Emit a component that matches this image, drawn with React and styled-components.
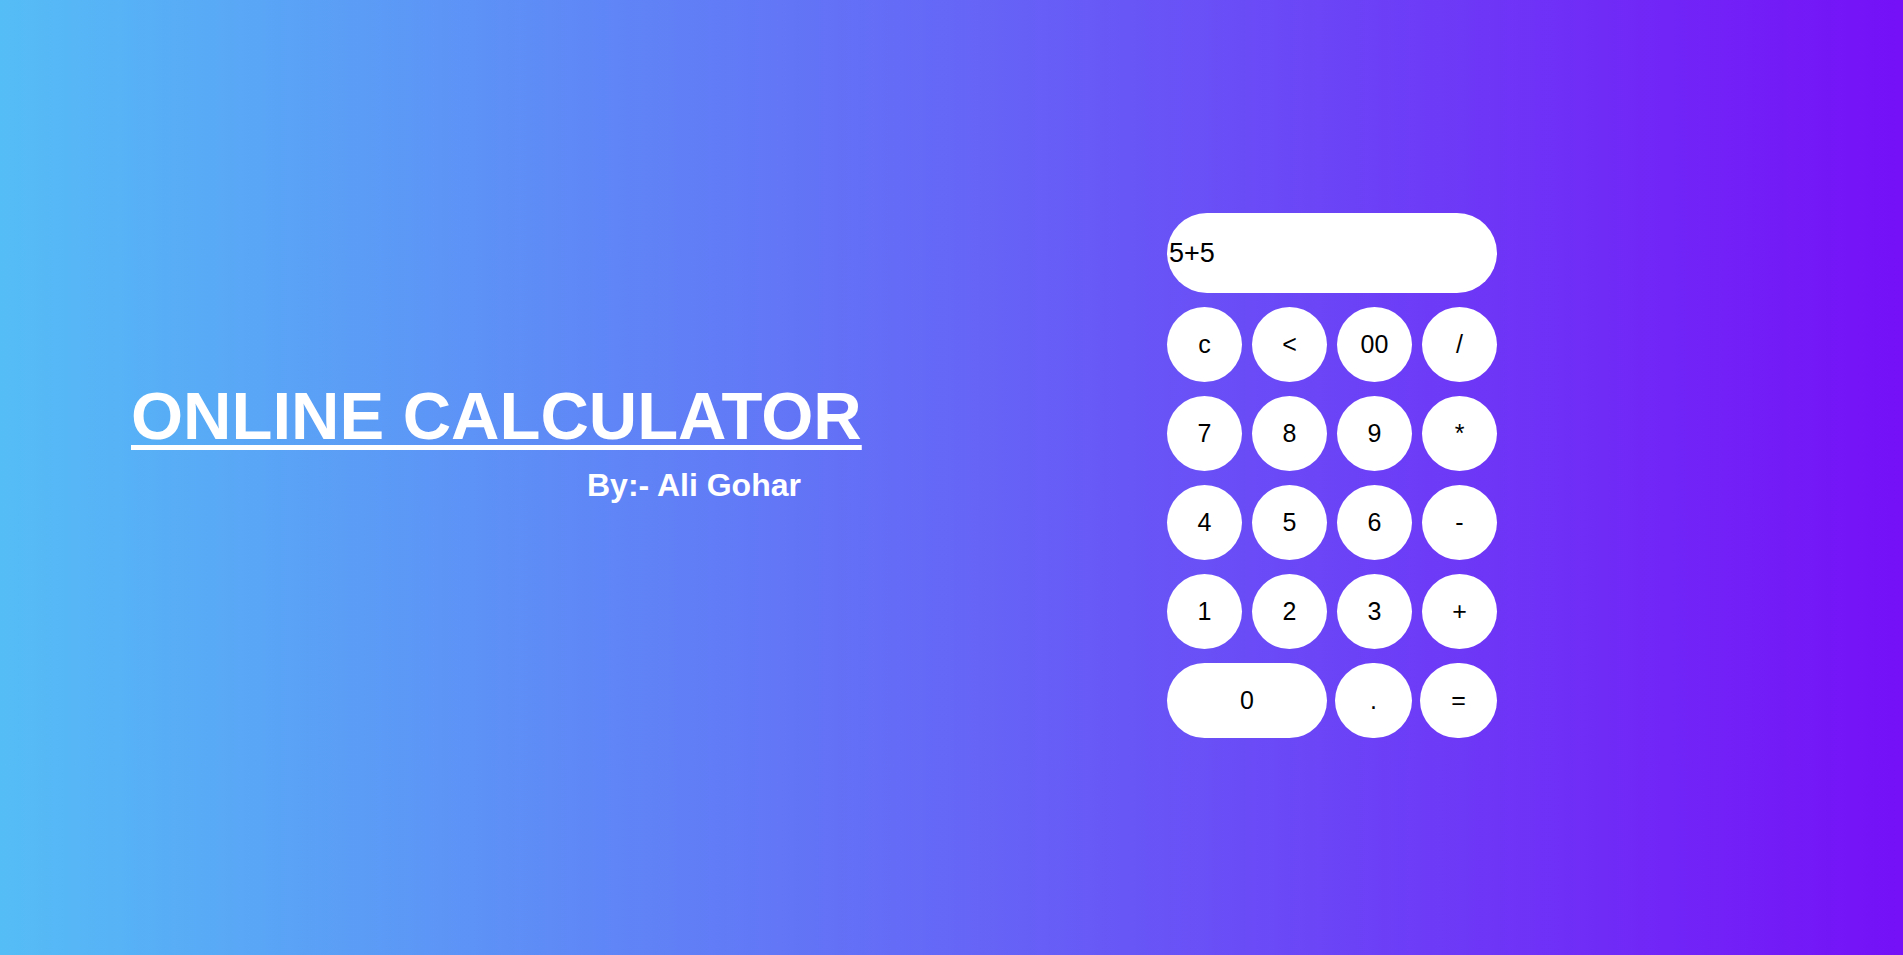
import styled, { createGlobalStyle } from 'styled-components';

const GlobalStyle = createGlobalStyle`
  * {
    box-sizing: border-box;
  }
  body {
    margin: 0;
    font-family: 'Liberation Sans', Arial, sans-serif;
  }
`;

const Page = styled.div`
  width: 100%;
  height: 100vh;
  display: flex;
  align-items: center;
  padding-left: 131px;
  background: linear-gradient(to right, #55bdf6, #7510f7);
`;

const Intro = styled.div`
  width: 1036px;
  display: flex;
  flex-direction: column;
  color: #fff;
  margin-top: -74px;
`;

const Title = styled.h1`
  margin: 0;
  font-size: 67px;
  font-weight: 700;
  line-height: 1.15;
  text-decoration: underline;
  text-decoration-thickness: 5px;
  text-underline-offset: 6px;
`;

const Author = styled.h3`
  margin: 12px 0 0 456px;
  font-size: 32px;
  font-weight: 700;
`;

const Calculator = styled.div`
  margin-top: -4px;
  display: grid;
  grid-template-columns: repeat(4, 75px);
  column-gap: 10px;
  row-gap: 14px;
`;

const Display = styled.input`
  grid-column: span 4;
  height: 80px;
  border: none;
  outline: none;
  border-radius: 40px;
  background: #fff;
  padding: 0 0 0 2px;
  font-family: 'Liberation Sans', Arial, sans-serif;
  font-size: 27px;
  color: #000;
`;

const Key = styled.button`
  grid-column: span ${(p) => p.span || 1};
  height: 75px;
  margin-left: ${(p) => (p.shift ? '-2px' : '0')};
  border: none;
  border-radius: 40px;
  background: #fff;
  font-family: 'Liberation Sans', Arial, sans-serif;
  font-size: 25px;
  color: #000;
  cursor: pointer;
`;

const keys = ['c', '<', '00', '/', '7', '8', '9', '*', '4', '5', '6', '-', '1', '2', '3', '+'];

const App = () => {
  return (
    <Page>
      <GlobalStyle />
      <Intro>
        <Title>ONLINE CALCULATOR</Title>
        <Author>By:- Ali Gohar</Author>
      </Intro>
      <Calculator>
        <Display type='text' defaultValue='5+5' />
        {keys.map((k) => (
          <Key key={k}>{k}</Key>
        ))}
        <Key span={2}>0</Key>
        <Key shift>.</Key>
        <Key shift>=</Key>
      </Calculator>
    </Page>
  );
};

export default App;
